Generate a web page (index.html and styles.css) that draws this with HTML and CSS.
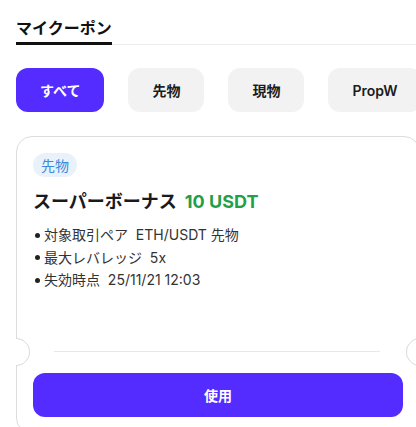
FILE: index.html
```html
<!DOCTYPE html>
<html lang="ja">
<head>
<meta charset="utf-8">
<title>マイクーポン</title>
<link rel="stylesheet" href="styles.css">
</head>
<body>
<div class="page">
  <div class="header">
    <div class="header-tab">マイクーポン</div>
  </div>
  <div class="filters">
    <div class="chip chip-active">すべて</div>
    <div class="chip">先物</div>
    <div class="chip">現物</div>
    <div class="chip">PropW</div>
  </div>
  <div class="card">
    <span class="tag">先物</span>
    <div class="title">スーパーボーナス<span class="amount">10 USDT</span></div>
    <ul class="details">
      <li>対象取引ペア&nbsp;&nbsp;ETH/USDT 先物</li>
      <li>最大レバレッジ&nbsp;&nbsp;5x</li>
      <li>失効時点&nbsp;&nbsp;25/11/21 12:03</li>
    </ul>
    <div class="cut">
      <span class="notch notch-left"></span>
      <span class="cut-line"></span>
      <span class="notch notch-right"></span>
    </div>
    <button class="use-btn">使用</button>
  </div>
</div>
</body>
</html>
```

FILE: styles.css
```css
html, body {
  margin: 0;
  padding: 0;
  overflow: hidden;
  background: #ffffff;
}

body {
  font-family: "Inter", "Noto Sans CJK JP", sans-serif;
  color: #1a1a1a;
}

.page {
  padding: 16px 0 0 16px;
  width: 404px;
}

.header {
  display: flex;
  border-bottom: 1px solid #ececec;
  margin-right: -4px;
}

.header-tab {
  font-size: 16px;
  font-weight: 700;
  line-height: 24px;
  padding-bottom: 2px;
  border-bottom: 3px solid #111111;
  margin-bottom: -1px;
  color: #111111;
}

.filters {
  display: flex;
  gap: 24px;
  margin-top: 23px;
  white-space: nowrap;
}

.chip {
  flex: none;
  height: 44px;
  min-width: 76px;
  box-sizing: border-box;
  padding: 0 24px;
  border-radius: 12px;
  background: #f2f2f2;
  display: flex;
  align-items: center;
  justify-content: center;
  font-size: 14px;
  font-weight: 600;
  color: #1c1c1c;
}

.chip-active {
  background: #552cff;
  color: #ffffff;
  font-weight: 700;
}

.card {
  margin-top: 24px;
  border: 1px solid #dcdcdc;
  border-radius: 16px;
  padding: 16px 16px 16px 16px;
  width: 370px;
  display: flex;
  flex-direction: column;
  align-items: flex-start;
}

.tag {
  display: inline-flex;
  align-items: center;
  height: 24px;
  padding: 0 8px;
  border-radius: 12px;
  background: #e9f2fb;
  color: #3b87d8;
  font-size: 14px;
}

.title {
  margin-top: 12px;
  font-size: 18px;
  font-weight: 700;
  line-height: 26px;
  color: #1a1a1a;
}

.amount {
  margin-left: 8px;
  color: #21a04a;
}

.details {
  list-style: none;
  margin: 9px 0 0 0;
  padding: 0;
  font-size: 14px;
  line-height: 22.5px;
  color: #333333;
}

.details li {
  display: flex;
  align-items: center;
}

.details li::before {
  content: "";
  width: 5px;
  height: 5px;
  border-radius: 50%;
  background: #222222;
  margin: 0 4px 0 2px;
}

.cut {
  position: relative;
  align-self: stretch;
  margin: 46px -17px 0 -17px;
  height: 28px;
  display: flex;
  align-items: center;
  padding: 0 40px 0 38px;
}

.cut-line {
  flex: 1;
  height: 1px;
  background: #e8e8e8;
}

.notch {
  position: absolute;
  top: 0;
  width: 28px;
  height: 28px;
  box-sizing: border-box;
  border-radius: 50%;
  background: #ffffff;
  border: 1px solid #dcdcdc;
  border-left-color: transparent;
  border-bottom-color: transparent;
}

.notch-left {
  left: -14px;
  transform: rotate(45deg);
}

.notch-right {
  right: -14px;
  transform: rotate(-135deg);
}

.use-btn {
  align-self: stretch;
  margin-top: 7px;
  height: 44px;
  border: none;
  border-radius: 12px;
  background: #552cff;
  color: #ffffff;
  font-family: "Inter", "Noto Sans CJK JP", sans-serif;
  font-size: 14px;
  font-weight: 700;
}
```
